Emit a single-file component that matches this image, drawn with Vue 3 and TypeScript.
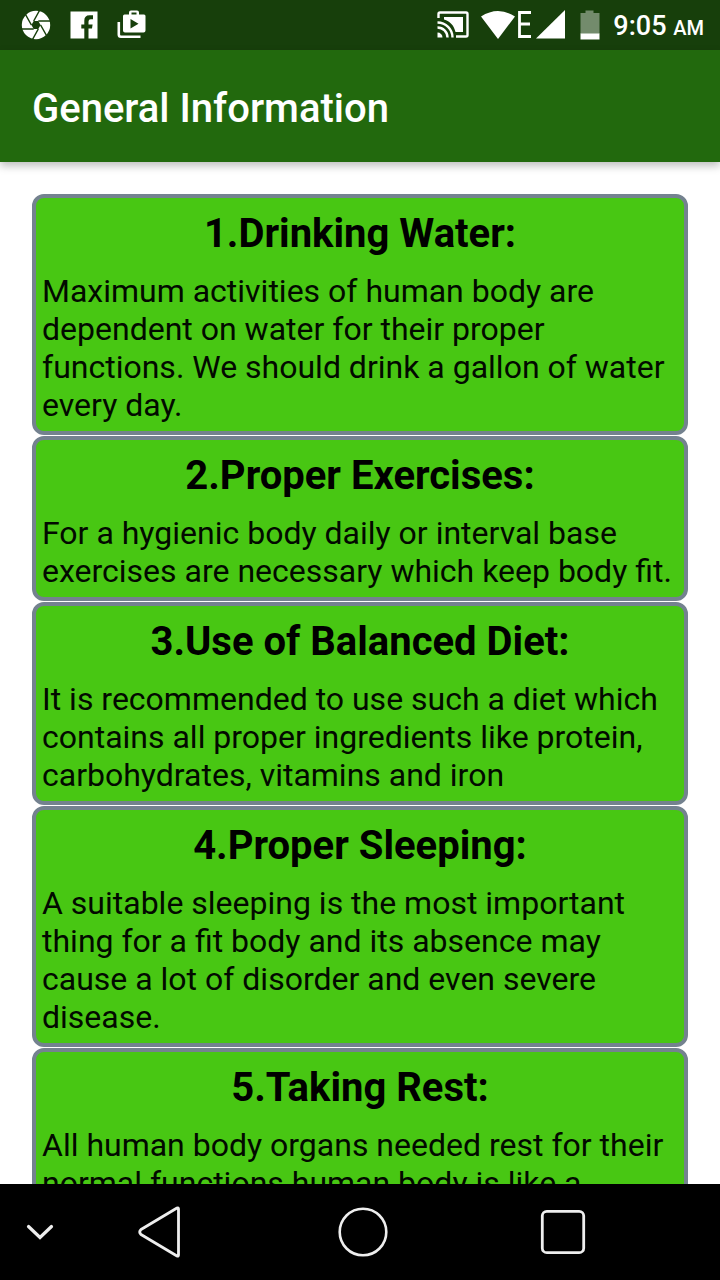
<script setup lang="ts">
interface Tip {
  title: string
  text: string
}

const tips: Tip[] = [
  {
    title: '1.Drinking Water:',
    text: 'Maximum activities of human body are dependent on water for their proper functions. We should drink a gallon of water every day.',
  },
  {
    title: '2.Proper Exercises:',
    text: 'For a hygienic body daily or interval base exercises are necessary which keep body fit.',
  },
  {
    title: '3.Use of Balanced Diet:',
    text: 'It is recommended to use such a diet which contains all proper ingredients like protein, carbohydrates, vitamins and iron',
  },
  {
    title: '4.Proper Sleeping:',
    text: 'A suitable sleeping is the most important thing for a fit body and its absence may cause a lot of disorder and even severe disease.',
  },
  {
    title: '5.Taking Rest:',
    text: 'All human body organs needed rest for their normal functions human body is like a',
  },
]
</script>

<template>
  <div class="screen">
    <div class="status">
      <div class="notices">
        <svg width="30" height="30" viewBox="0 0 30 30" aria-hidden="true">
          <circle cx="15" cy="15" r="14.2" fill="#fff" />
          <path
            d="M12.7 11 L18.5 0.5 M17.3 11 H29.5 M19.6 15 L25.5 25.5 M17.3 19 L11.5 29.5 M12.7 19 H0.5 M10.4 15 L4.5 4.5"
            fill="none" stroke="#173f0b" stroke-width="1.5" />
          <path d="M17.3 11 H12.7 L10.4 15 L12.7 19 H17.3 L19.6 15 Z" fill="#173f0b" />
        </svg>
        <svg width="28" height="28" viewBox="0 0 28 28" aria-hidden="true">
          <path
            d="M0.5 0.5 H27.5 V27.5 H18.5 V17.5 H22 L22.6 13.5 H18.5 V10.5 Q18.5 8.3 20.7 8.3 H23 V4.3 H19.5 Q14.3 4.3 14.3 9.8 V13.5 H11.3 V17.5 H14.3 V27.5 H0.5 Z"
            fill="#fff" />
        </svg>
        <svg width="30" height="30" viewBox="0 0 30 30" aria-hidden="true">
          <path
            fill-rule="evenodd"
            d="M6 6 Q6 4.5 7.5 4.5 H12 V2.5 Q12 0.5 14 0.5 H20 Q22 0.5 22 2.5 V4.5 H27 Q28.5 4.5 28.5 6 V20.5 Q28.5 22.5 26.5 22.5 H8 Q6 22.5 6 20.5 Z M14.5 2.5 V4.5 H19.5 V2.5 Z M13.5 9 V18.5 L21.5 13.8 Z"
            fill="#fff" />
          <path d="M1.8 12 V24.5 Q1.8 26.7 4 26.7 H23.5" fill="none" stroke="#fff" stroke-width="2.6" />
        </svg>
      </div>
      <svg width="32" height="28" viewBox="0 0 32 28" aria-hidden="true">
        <path d="M1.5 7 V3 Q1.5 1.5 3 1.5 H29 Q30.5 1.5 30.5 3 V24 Q30.5 25.5 29 25.5 H19" fill="none" stroke="#fff" stroke-width="2.4" />
        <path d="M7 6 H26 V21 H18.5 C17 14.5 13 10 7 8.5 Z" fill="#fff" />
        <path d="M0.5 11.5 A15 15 0 0 1 15.5 26.5 M0.5 16.5 A10 10 0 0 1 10.5 26.5" fill="none" stroke="#fff" stroke-width="2.4" />
        <path d="M0.5 21.5 A5 5 0 0 1 5.5 26.5 H0.5 Z" fill="#fff" />
      </svg>
      <svg class="signal" width="86" height="30" viewBox="0 0 86 30" aria-hidden="true">
        <path d="M0 6.5 Q17 -0.5 34 6.5 L17 29 Z M0 6.5 Q17 -4.5 34 6.5 Z" fill="#fff" />
        <path d="M50 2.5 H38.5 V26.5 H50 M38.5 14 H49" fill="none" stroke="#fff" stroke-width="2.8" />
        <path d="M84 0 V28.5 H55 Z" fill="#fff" />
      </svg>
      <svg class="battery" width="20" height="30" viewBox="0 0 20 30" aria-hidden="true">
        <path d="M0.5 3 H5.5 V0.5 H13.5 V3 H19.5 V24 H0.5 Z" fill="#738b6c" />
        <path d="M0.5 23.5 H19.5 V29.5 H0.5 Z" fill="#fff" />
      </svg>
      <time class="clock">9:05 <small>AM</small></time>
    </div>

    <header class="bar">
      <h1>General Information</h1>
    </header>

    <main class="content">
      <article v-for="tip in tips" :key="tip.title" class="card">
        <h2>{{ tip.title }}</h2>
        <p>{{ tip.text }}</p>
      </article>
    </main>

    <nav class="nav">
      <button type="button" aria-label="Hide navigation bar">
        <svg width="28" height="16" viewBox="0 0 28 16">
          <path d="M2.5 2.5 L14 13.5 L25.5 2.5" fill="none" stroke="#eee" stroke-width="3.2" stroke-linecap="round" />
        </svg>
      </button>
      <button type="button" aria-label="Back">
        <svg width="44" height="54" viewBox="0 0 44 54">
          <path d="M39 3 Q40.5 2.3 40.500 4 V50 Q40.5 51.7 39 51 L3 29.500 Q0.500 27 3 24.500 Z" fill="none" stroke="#eee" stroke-width="2.8" stroke-linejoin="round" />
        </svg>
      </button>
      <button type="button" aria-label="Home">
        <svg width="50" height="50" viewBox="0 0 50 50">
          <circle cx="25" cy="25" r="23.3" fill="none" stroke="#eee" stroke-width="2.6" />
        </svg>
      </button>
      <button type="button" aria-label="Recent apps">
        <svg width="46" height="46" viewBox="0 0 46 46">
          <rect x="2.3" y="2.3" width="41.4" height="41.4" rx="4.5" fill="none" stroke="#eee" stroke-width="2.8" />
        </svg>
      </button>
    </nav>
  </div>
</template>

<style>
body {
  margin: 0;
  background: #fff;
}
</style>

<style scoped>
.screen {
  display: flex;
  flex-direction: column;
  height: 100vh;
  overflow: hidden;
  font-family: Roboto, "Noto Sans", sans-serif;
  color: #020a00;
}

svg {
  display: block;
  flex: none;
}

.status {
  display: flex;
  align-items: center;
  height: 50px;
  padding: 0 16px 0 21px;
  box-sizing: border-box;
  background: #173f0b;
  color: #fff;
  flex: none;
}

.notices {
  display: flex;
  align-items: center;
  gap: 19px;
  margin-right: auto;
}

.signal {
  margin-left: 12px;
}

.battery {
  margin-left: 13px;
}

.clock {
  margin-left: 13px;
  padding-top: 4px;
  font-size: 27px;
  line-height: 40px;
  font-weight: 500;
  white-space: nowrap;
}

.clock small {
  font-size: 20px;
}

.bar {
  position: relative;
  flex: none;
  display: flex;
  align-items: center;
  height: 112px;
  padding: 6px 32px 0;
  box-sizing: border-box;
  background: #22690d;
  color: #fff;
  box-shadow: 0 4px 8px rgba(0, 0, 0, 0.25);
}

h1 {
  margin: 0;
  font-size: 40px;
  line-height: 48px;
  font-weight: 500;
}

.content {
  flex: 1;
  min-height: 0;
  overflow: hidden;
  padding: 32px 32px 0;
  background: #fff;
}

.card {
  margin-bottom: 1px;
  padding: 12px 6px 7px;
  border: 4px solid #74828f;
  border-radius: 12px;
  background: #48c713;
}

.card h2 {
  margin: 0 0 14px;
  font-size: 40px;
  line-height: 48px;
  font-weight: 700;
  text-align: center;
  color: #000;
}

.card p {
  margin: 0;
  font-size: 32px;
  line-height: 38px;
}

.nav {
  flex: none;
  display: grid;
  grid-template-columns: 80fr 160fr 246fr 154fr 80fr;
  align-items: center;
  justify-items: center;
  height: 96px;
  background: #000;
}

.nav button {
  padding: 0;
  border: 0;
  background: none;
}
</style>
